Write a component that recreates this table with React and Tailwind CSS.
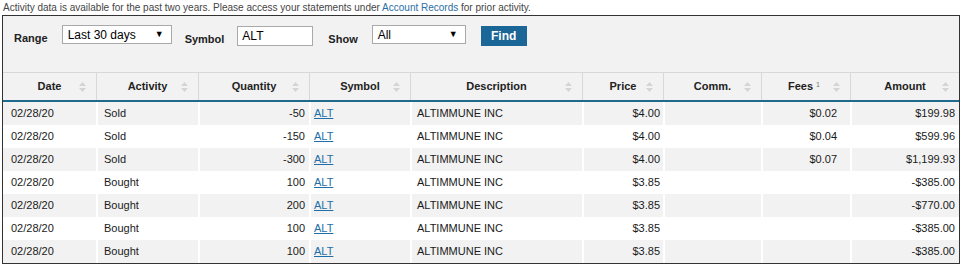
const rows = [
  { date: "02/28/20", act: "Sold", qty: "-50", price: "$4.00", fees: "$0.02", amt: "$199.98" },
  { date: "02/28/20", act: "Sold", qty: "-150", price: "$4.00", fees: "$0.04", amt: "$599.96" },
  { date: "02/28/20", act: "Sold", qty: "-300", price: "$4.00", fees: "$0.07", amt: "$1,199.93" },
  { date: "02/28/20", act: "Bought", qty: "100", price: "$3.85", fees: "", amt: "-$385.00" },
  { date: "02/28/20", act: "Bought", qty: "200", price: "$3.85", fees: "", amt: "-$770.00" },
  { date: "02/28/20", act: "Bought", qty: "100", price: "$3.85", fees: "", amt: "-$385.00" },
  { date: "02/28/20", act: "Bought", qty: "100", price: "$3.85", fees: "", amt: "-$385.00" },
];

const cols = ["Date", "Activity", "Quantity", "Symbol", "Description", "Price", "Comm.", "Fees", "Amount"];

const grid = "grid grid-cols-[93px_102px_111px_101px_172px_81px_98px_89px_1fr]";

function SortIcon() {
  return (
    <span className="absolute right-[10px] top-1/2 -translate-y-1/2 flex flex-col gap-[2px]">
      <svg width="7" height="4" viewBox="0 0 7 4">
        <path d="M3.5 0 L7 4 L0 4 Z" fill="#d4d4d4" />
      </svg>
      <svg width="7" height="4" viewBox="0 0 7 4">
        <path d="M0 0 L7 0 L3.5 4 Z" fill="#d4d4d4" />
      </svg>
    </span>
  );
}

function Select({ value, width }) {
  return (
    <div
      className={`flex items-center justify-between h-[19px] bg-white border border-[#a9a9a9] pl-[5px] pr-[7px] text-[12px] text-black ${width}`}
    >
      <span className="leading-none">{value}</span>
      <span className="text-[9px] leading-none">▼</span>
    </div>
  );
}

export default function App() {
  return (
    <div className="w-[969px] h-[273px] bg-white font-['Liberation_Sans',Arial,sans-serif] text-[#222]">
      <p className="text-[10px] leading-[13px] pl-[3px] pt-[1px] text-[#444]">
        Activity data is available for the past two years. Please access your statements under{" "}
        <span className="text-[#2a6ea6]">Account Records</span> for prior activity.
      </p>

      <div className="ml-[2px] mt-[1px] w-[958px] border border-[#333] bg-[#f2f2f2]">
        <div className="h-[56px] flex items-start pt-[9px] pl-[11px]">
          <span className="text-[11px] font-bold mt-[5px] mr-[14px]">Range</span>
          <Select value="Last 30 days" width="w-[110px]" />
          <span className="text-[11px] font-bold mt-[6px] ml-[13px] mr-[13px]">Symbol</span>
          <div className="h-[20px] mt-[1px] w-[76px] bg-white border border-[#a9a9a9] pl-[4px] text-[12px] leading-[18px] text-black">
            ALT
          </div>
          <span className="text-[11px] font-bold mt-[6px] ml-[15px] mr-[14px]">Show</span>
          <Select value="All" width="w-[94px]" />
          <button className="ml-[15px] mt-[1px] h-[20px] w-[46px] bg-[#1a6697] text-white text-[12px] font-bold leading-none">
            Find
          </button>
        </div>

        <div className={`${grid} h-[30px] border-t border-[#d8d8d8] border-b-2 border-b-[#1f6a8f]`}>
          {cols.map((c, i) => (
            <div
              key={c}
              className={`relative flex items-center justify-center text-[11px] font-bold text-[#222] ${
                i > 0 ? "border-l border-[#d8d8d8]" : ""
              }`}
            >
              <span className={c === "Fees" ? "-ml-[4px]" : ""}>
                {c}
                {c === "Fees" && <sup className="text-[7px] font-normal ml-[3px] text-[#777]">1</sup>}
              </span>
              <SortIcon />
            </div>
          ))}
        </div>

        {rows.map((r, idx) => {
          const bg = idx % 2 === 0 ? "bg-[#f2f2f2]" : "bg-white";
          const cell = "flex items-center border-l-2 border-white";
          return (
            <div key={idx} className={`${grid} h-[23px] text-[11px] text-[#1a1a1a] ${bg}`}>
              <div className="flex items-center pl-[8px]">{r.date}</div>
              <div className={`${cell} pl-[6px]`}>{r.act}</div>
              <div className={`${cell} justify-end pr-[4px]`}>{r.qty}</div>
              <div className={`${cell} pl-[3px]`}>
                <span className="text-[#1f6ea8] underline">ALT</span>
              </div>
              <div className={`${cell} pl-[5px]`}>ALTIMMUNE INC</div>
              <div className={`${cell} justify-end pr-[3px]`}>{r.price}</div>
              <div className={cell}></div>
              <div className={`${cell} justify-end pr-[13px]`}>{r.fees}</div>
              <div className={`${cell} justify-end pr-[4px]`}>{r.amt}</div>
            </div>
          );
        })}
      </div>
    </div>
  );
}
